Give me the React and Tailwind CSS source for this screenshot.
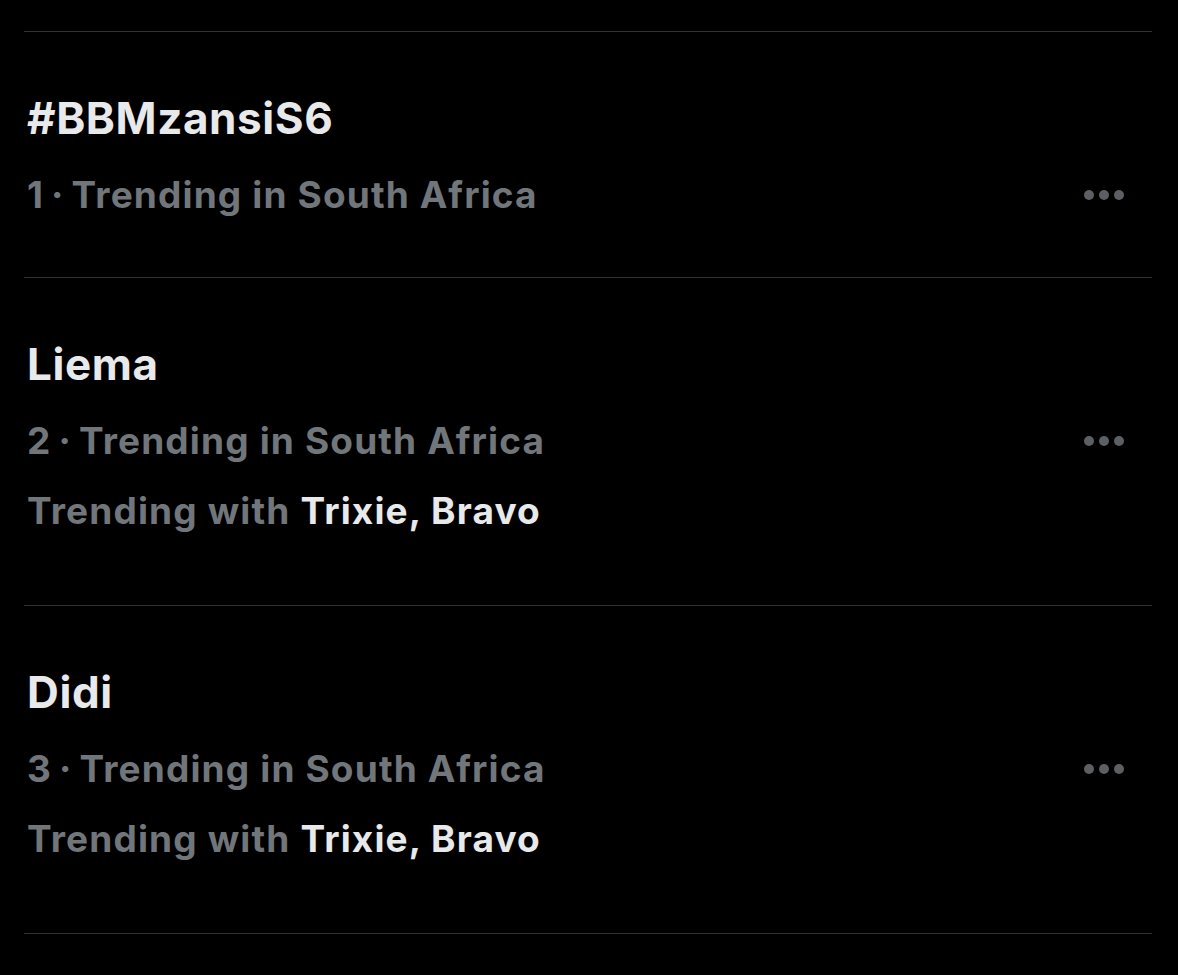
import React from 'react';

const trends = [
  { rank: 1, title: '#BBMzansiS6', with: null },
  { rank: 2, title: 'Liema', with: 'Trixie, Bravo' },
  { rank: 3, title: 'Didi', with: 'Trixie, Bravo' },
];

function MoreDots() {
  return (
    <div className="flex items-center gap-[5px] pr-[28px]">
      <span className="w-[10px] h-[10px] rounded-full bg-[#5c6064]" />
      <span className="w-[10px] h-[10px] rounded-full bg-[#5c6064]" />
      <span className="w-[10px] h-[10px] rounded-full bg-[#5c6064]" />
    </div>
  );
}

function TrendRow({ trend }) {
  return (
    <div className={`border-b border-[#2f3336] pt-[58px] ${trend.with ? 'pb-[66px]' : 'pb-[54px]'}`}>
      <div className="text-[44px] leading-[56px] font-bold tracking-[0.6px] text-[#e7e9ea] pl-[3px]">{trend.title}</div>
      <div className="flex items-center justify-between mt-[21px]">
        <div className="text-[37px] leading-[56px] font-bold tracking-[1.15px] text-[#71767b] pl-[3px]">
          {trend.rank}{'\u2009·\u2009'}Trending in South Africa
        </div>
        <MoreDots />
      </div>
      {trend.with && (
        <div className="text-[37px] leading-[56px] font-bold tracking-[1.15px] text-[#71767b] pl-[3px] mt-[14px]">
          Trending with <span className="text-[#e7e9ea]">{trend.with}</span>
        </div>
      )}
    </div>
  );
}

export default function App() {
  return (
    <div className="min-h-screen bg-black pt-[31px] pl-[24px] pr-[26px]" style={{ fontFamily: 'Inter, "Liberation Sans", sans-serif' }}>
      <div className="border-t border-[#2f3336]">
        {trends.map(t => (
          <TrendRow key={t.rank} trend={t} />
        ))}
      </div>
    </div>
  );
}
